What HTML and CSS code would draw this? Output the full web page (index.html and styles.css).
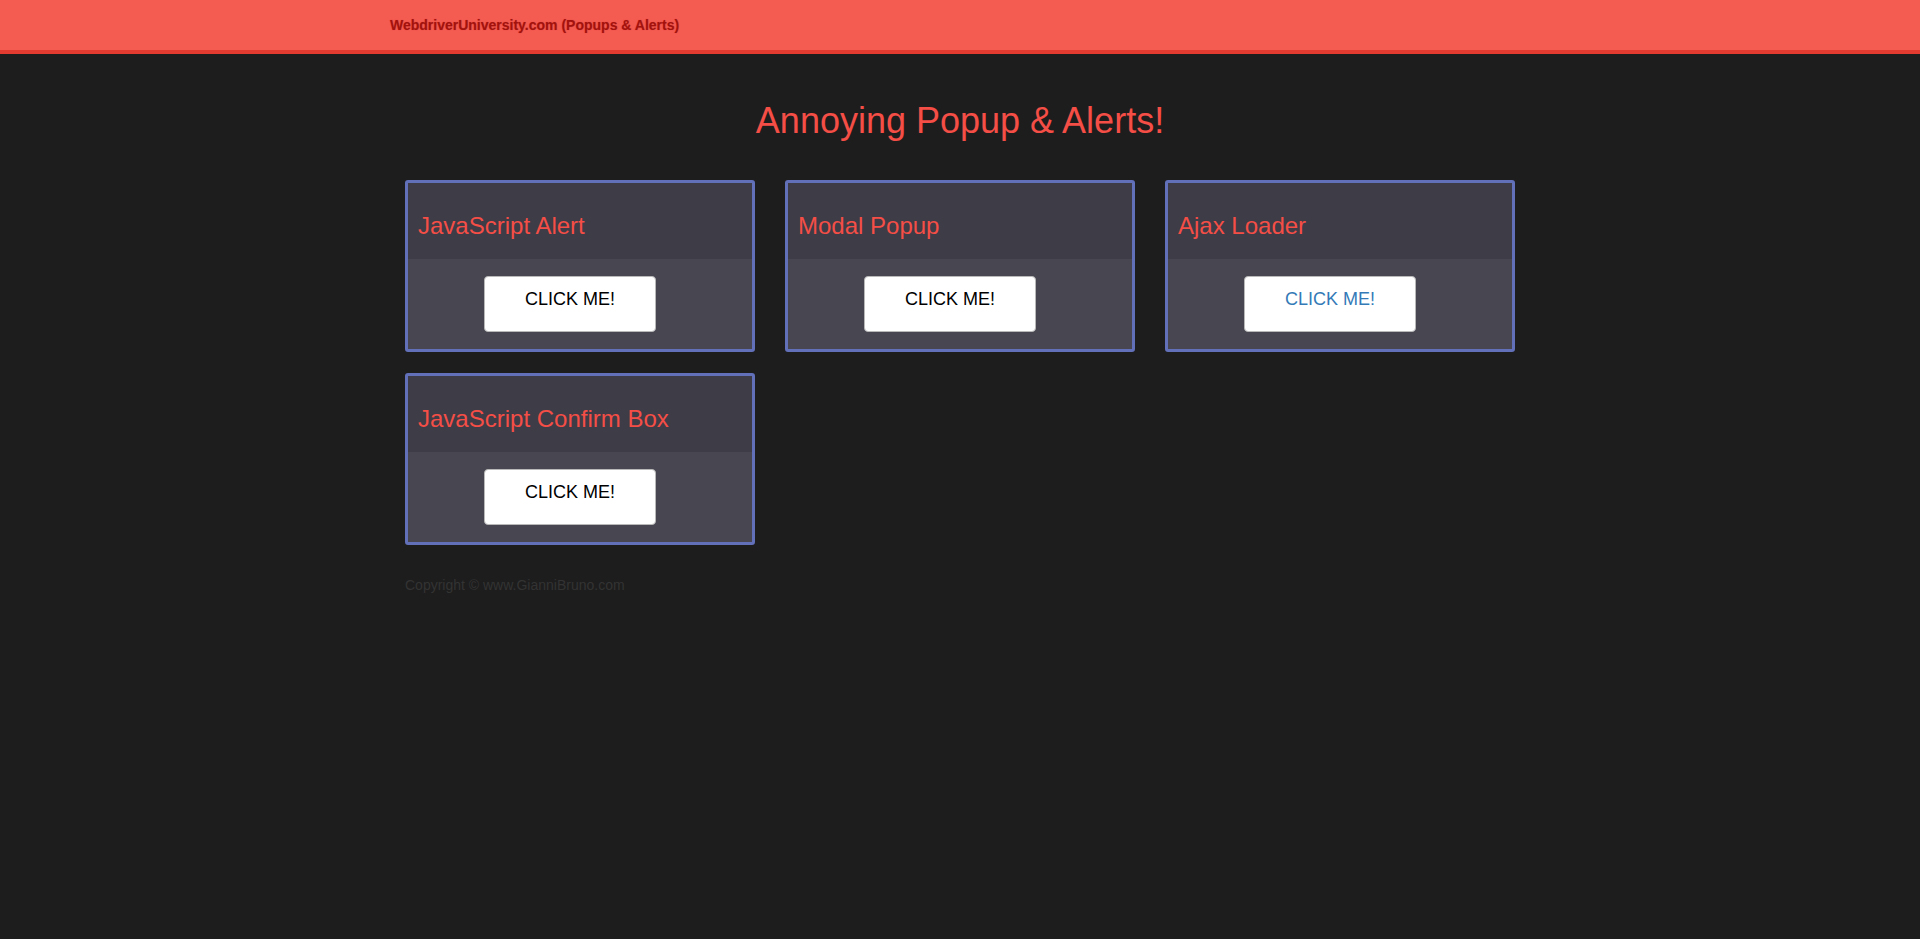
FILE: index.html
```html
<!DOCTYPE html>
<html lang="en">
<head>
<meta charset="utf-8">
<title>WebdriverUniversity.com (Popups &amp; Alerts)</title>
<link rel="stylesheet" href="styles.css">
</head>
<body>
<nav class="navbar">
  <div class="nav-inner">
    <a class="brand">WebdriverUniversity.com (Popups &amp; Alerts)</a>
  </div>
</nav>
<main class="container">
  <h1 class="page-title">Annoying Popup &amp; Alerts!</h1>
  <div class="grid">
    <section class="card">
      <div class="card-head"><h2 class="card-title">JavaScript Alert</h2></div>
      <div class="card-body"><span class="btn">CLICK ME!</span></div>
    </section>
    <section class="card">
      <div class="card-head"><h2 class="card-title">Modal Popup</h2></div>
      <div class="card-body"><span class="btn">CLICK ME!</span></div>
    </section>
    <section class="card">
      <div class="card-head"><h2 class="card-title">Ajax Loader</h2></div>
      <div class="card-body"><span class="btn btn-link">CLICK ME!</span></div>
    </section>
    <section class="card">
      <div class="card-head"><h2 class="card-title">JavaScript Confirm Box</h2></div>
      <div class="card-body"><span class="btn">CLICK ME!</span></div>
    </section>
  </div>
  <footer class="footer">Copyright &copy; www.GianniBruno.com</footer>
</main>
</body>
</html>
```

FILE: styles.css
```css
html, body {
  margin: 0;
  padding: 0;
  background: #1d1d1d;
  font-family: "Liberation Sans", Arial, sans-serif;
}

.navbar {
  height: 50px;
  background: #f45b51;
  border-bottom: 4px solid #e33b30;
}

.nav-inner {
  width: 1140px;
  margin: 0 auto;
  padding-top: 15px;
}

.brand {
  font-size: 14px;
  line-height: 20px;
  font-weight: bold;
  color: #a3120d;
  text-shadow: 0 0 1px rgba(160, 20, 15, 0.4);
}

.container {
  width: 1110px;
  margin: 0 auto;
  padding: 0 15px;
}

.page-title {
  margin: 47px 0 39px;
  font-size: 36px;
  line-height: 40px;
  font-weight: normal;
  text-align: center;
  color: #f44e46;
}

.grid {
  display: grid;
  grid-template-columns: repeat(3, 350px);
  column-gap: 30px;
  row-gap: 21px;
}

.card {
  border: 3px solid #6170b9;
  border-radius: 3px;
  background: #474651;
  overflow: hidden;
}

.card-head {
  height: 76px;
  box-sizing: border-box;
  padding: 30px 10px 0;
  background: #3d3c47;
}

.card-title {
  margin: 0;
  font-size: 24px;
  line-height: 26px;
  font-weight: normal;
  color: #f44e46;
}

.card-body {
  height: 90px;
  box-sizing: border-box;
  padding: 17px 0 17px 76px;
  background: #474651;
}

.btn {
  display: block;
  width: 172px;
  height: 56px;
  box-sizing: border-box;
  padding-top: 12px;
  border: 1px solid #b9b9b9;
  border-radius: 4px;
  background: #ffffff;
  font-size: 18px;
  line-height: 20px;
  text-align: center;
  color: #000000;
}

.btn-link {
  color: #337ab7;
}

.footer {
  margin-top: 30px;
  font-size: 14px;
  line-height: 20px;
  color: #333333;
}
```
